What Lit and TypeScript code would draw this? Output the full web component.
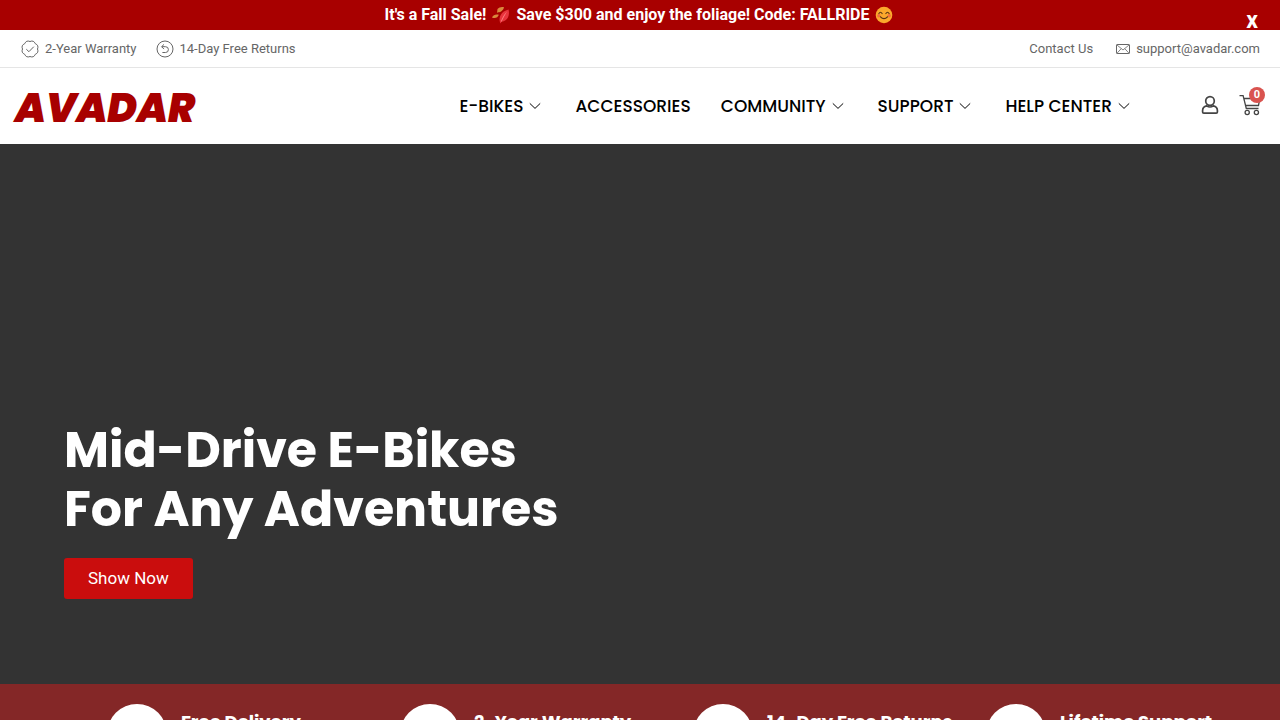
import { LitElement, html, css, svg, nothing } from "lit";
import { customElement, state } from "lit/decorators.js";

interface NavItem {
  label: string;
  menu: boolean;
}

const NAV: NavItem[] = [
  { label: "E-BIKES", menu: true },
  { label: "ACCESSORIES", menu: false },
  { label: "COMMUNITY", menu: true },
  { label: "SUPPORT", menu: true },
  { label: "HELP CENTER", menu: true },
];

const FEATURES = ["Free Delivery", "2-Year Warranty", "14-Day Free Returns", "Lifetime Support"];

// Scalloped edge of the warranty seal, centred on 9,9.
const SEAL = (() => {
  const at = (r: number, a: number) => `${(9 + r * Math.cos(a)).toFixed(2)} ${(9 + r * Math.sin(a)).toFixed(2)}`;
  const step = Math.PI / 4;
  let d = `M${at(7.5, 0)}`;
  for (let i = 0; i < 8; i++) d += `Q${at(9.8, (i + 0.5) * step)} ${at(7.5, (i + 1) * step)}`;
  return d + "Z";
})();

const sealIcon = svg`<svg width="18" height="18" viewBox="0 0 18 18" aria-hidden="true"><path d=${SEAL} /><path d="M5.300 9.200l2.600 2.500 4.900-5" /></svg>`;
const returnIcon = svg`<svg width="18" height="18" viewBox="0 0 18 18" aria-hidden="true"><circle cx="9" cy="9" r="8" /><path d="M8 4.400L5.600 6.700l2.400 2.400M5.800 6.700h3.700a2.900 2.900 0 0 1 0 5.800H6.400" /></svg>`;
const mailIcon = svg`<svg width="16" height="12" viewBox="0 0 16 12" aria-hidden="true"><rect x="1.500" y="1.500" width="13" height="9" rx=".6" /><path d="M2 2l6 5 6-5M2 10.200l4.200-4.500M14 10.200L9.800 5.700" stroke-width=".8" /></svg>`;
const chevron = svg`<svg width="12" height="8" viewBox="0 0 12 8" aria-hidden="true"><path d="M.8 1.400L6 6.400l5.200-5" /></svg>`;
const userIcon = svg`<svg width="18" height="20" viewBox="0 0 18 20" aria-hidden="true"><circle cx="9" cy="6" r="4.300" /><path d="M5.600 10.900C3 11.500 1.600 13.200 1.600 15.500v1.500c0 .8.500 1.200 1.200 1.200h12.400c.7 0 1.200-.4 1.200-1.200v-1.500c0-2.300-1.400-4-4-4.600-2 1.300-4.800 1.300-6.800 0z" /></svg>`;
const cartIcon = svg`<svg width="22" height="22" viewBox="0 0 22 22" aria-hidden="true"><path d="M.5 1.700h3.600L7.300 14.500h12.200M4.800 4.500h16l-1.300 7H6.500" /><circle cx="8.200" cy="18.500" r="2.100" /><circle cx="17.400" cy="18.500" r="2.100" /></svg>`;

@customElement("app-root")
export class AppRoot extends LitElement {
  static styles = css`
    :host {
      display: block;
      min-height: 100vh;
      background: #fff;
      color: #666;
      font-family: Roboto, sans-serif;
    }
    * {
      box-sizing: border-box;
    }
    a {
      color: inherit;
      text-decoration: none;
    }
    button {
      font: inherit;
      border: 0;
      cursor: pointer;
    }
    svg {
      display: block;
      flex: none;
      fill: none;
      stroke: currentColor;
    }
    .sale {
      position: relative;
      display: flex;
      justify-content: center;
      height: 30px;
      background: #a80000;
      color: #fff;
      font-size: 16px;
      font-weight: 700;
      line-height: 30px;
    }
    .sale p {
      display: flex;
      align-items: center;
      gap: 6px;
      margin: 0;
      padding-right: 2px;
    }
    .sale svg {
      stroke: none;
    }
    .close {
      position: absolute;
      right: 16px;
      top: 8px;
      padding: 0 6px;
      background: none;
      color: #fff;
      font-size: 23px;
      line-height: 26px;
    }
    .utility {
      display: flex;
      justify-content: space-between;
      padding: 0 20px 0 21px;
      height: 38px;
      border-bottom: 1px solid #e5e5e5;
      font-size: 13px;
    }
    .group {
      display: flex;
      align-items: center;
      gap: 19px;
    }
    .group.end {
      gap: 22px;
    }
    .note {
      display: flex;
      align-items: center;
      gap: 6px;
    }
    .group.end .note {
      gap: 5px;
    }
    .header {
      display: flex;
      align-items: center;
      height: 76px;
      padding: 0 15px;
    }
    .logo {
      color: #a80000;
      font-family: Poppins, sans-serif;
      font-size: 40px;
      font-style: italic;
      font-weight: 900;
      line-height: 40px;
      padding-top: 4px;
    }
    .nav {
      display: flex;
      gap: 30px;
      margin-left: auto;
      margin-right: 67px;
      color: #000;
      font-family: Poppins, sans-serif;
      font-size: 17px;
      font-weight: 500;
    }
    .nav a {
      display: flex;
      align-items: center;
      gap: 6px;
      white-space: nowrap;
    }
    .nav a.menu {
      padding-right: 4px;
    }
    .tools {
      display: flex;
      align-items: center;
      gap: 20px;
      color: #444;
      padding: 0 4px 2px 0;
    }
    .user {
      stroke-width: 1.7;
    }
    .cart {
      position: relative;
      stroke-width: 1.3;
    }
    .badge {
      position: absolute;
      right: -4px;
      top: -7px;
      width: 16px;
      height: 16px;
      border-radius: 50%;
      background: #d9534f;
      color: #fff;
      font-size: 11px;
      font-weight: 700;
      line-height: 16px;
      text-align: center;
    }
    .hero {
      display: flex;
      flex-direction: column;
      justify-content: flex-end;
      align-items: flex-start;
      height: 540px;
      padding: 0 64px 85px;
      background: #333;
      color: #fff;
    }
    .hero h1 {
      margin: 0 0 19px;
      font-family: Poppins, sans-serif;
      font-size: 49px;
      font-weight: 700;
      line-height: 59px;
    }
    .cta {
      padding: 0 24px;
      border-radius: 3px;
      background: #ca0d0d;
      color: #fff;
      font-size: 17px;
      line-height: 41px;
    }
    .features {
      display: grid;
      grid-template-columns: repeat(4, minmax(0, 1fr));
      margin: 0;
      padding: 20px 54px;
      list-style: none;
      background: #842727;
      color: #fff;
      font-family: Poppins, sans-serif;
      font-size: 18px;
      font-weight: 700;
      line-height: 24px;
    }
    .feature {
      display: flex;
      gap: 14px;
      padding-left: 53px;
      white-space: nowrap;
    }
    .disc {
      flex: none;
      width: 60px;
      height: 60px;
      border-radius: 50%;
      background: #fff;
    }
    .feature span {
      padding-top: 6px;
    }
  `;

  @state() private saleOpen = true;

  render() {
    return html`
      ${this.saleOpen
        ? html`<div class="sale">
            <p>
              <span>It's a Fall Sale!</span>
              <svg width="18" height="18" viewBox="0 0 18 18" role="img" aria-label="fallen leaf">
                <path d="M5.500 3C7 1 10 .5 12 1.200 11.500 4 9 6.200 6 6.300L5 7z" fill="#d98a3d" />
                <path d="M0 11.500C1 9 4 7.800 6.800 8.800 6 11.500 3 13 0 11.500z" fill="#d98a3d" />
                <path d="M8 16.500C6.500 11 9 5.500 16.500 3.500 18 9 16 15 9.500 15.800L8.500 17.500z" fill="#e8343c" />
                <path d="M8.800 15.500C10 12 12 8.500 15 5.500C13 9 11 12.500 9.500 15.800z" fill="#ff7a7a" />
              </svg>
              <span>Save $300 and enjoy the foliage! Code: FALLRIDE</span>
              <svg width="18" height="18" viewBox="0 0 18 18" role="img" aria-label="smiling face">
                <circle cx="9" cy="9" r="8.300" fill="#fba92c" />
                <circle cx="3.800" cy="9.800" r="1.700" fill="#f5713c" />
                <circle cx="14.200" cy="9.800" r="1.700" fill="#f5713c" />
                <path d="M3.900 7.500Q5.500 5 7.100 7.500M10.900 7.500Q12.500 5 14.100 7.500M5.500 10.800Q9 14.500 12.500 10.800" fill="none" stroke="#5a3413" stroke-width="1.200" stroke-linecap="round" />
              </svg>
            </p>
            <button class="close" @click=${() => (this.saleOpen = false)}>x</button>
          </div>`
        : nothing}
      <div class="utility">
        <div class="group">
          <span class="note">${sealIcon}2-Year Warranty</span>
          <span class="note">${returnIcon}14-Day Free Returns</span>
        </div>
        <div class="group end">
          <a href="#">Contact Us</a>
          <a class="note" href="#">${mailIcon}support@avadar.com</a>
        </div>
      </div>
      <header class="header">
        <a class="logo" href="#">AVADAR</a>
        <nav class="nav">
          ${NAV.map((n) => html`<a href="#" class=${n.menu ? "menu" : ""}>${n.label}${n.menu ? chevron : nothing}</a>`)}
        </nav>
        <div class="tools">
          <a class="user" href="#" aria-label="Account">${userIcon}</a>
          <a class="cart" href="#" aria-label="Cart">${cartIcon}<span class="badge">0</span></a>
        </div>
      </header>
      <section class="hero">
        <h1>Mid-Drive E-Bikes<br />For Any Adventures</h1>
        <button class="cta">Show Now</button>
      </section>
      <ul class="features">
        ${FEATURES.map((f) => html`<li class="feature"><i class="disc"></i><span>${f}</span></li>`)}
      </ul>
    `;
  }
}
